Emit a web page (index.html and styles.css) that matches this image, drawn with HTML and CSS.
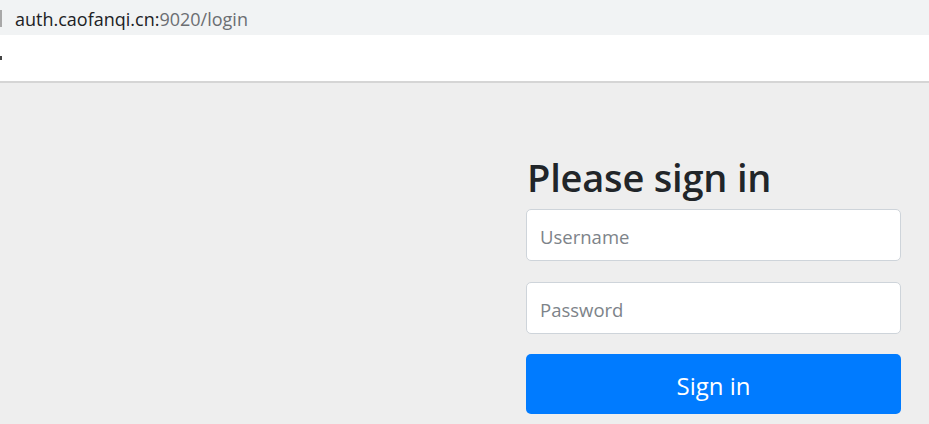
FILE: index.html
```html
<!DOCTYPE html>
<html>
<head>
<meta charset="utf-8">
<link rel="stylesheet" href="styles.css">
</head>
<body>
<div class="addr">
  <span class="caret"></span>
  <span class="url"><span class="host">auth.caofanqi.cn:</span><span class="path">9020/login</span></span>
</div>
<div class="toolbar"><span class="mark"></span></div>
<main class="page">
  <form class="signin">
    <h2 class="title">Please sign in</h2>
    <input class="field" type="text" placeholder="Username">
    <input class="field" type="password" placeholder="Password">
    <button class="btn" type="button">Sign in</button>
  </form>
</main>
</body>
</html>
```

FILE: styles.css
```css
html, body {
  margin: 0;
  padding: 0;
  height: 100%;
  overflow: hidden;
  background: #eeeeee;
  font-family: "Open Sans", "Noto Sans", sans-serif;
}
.addr {
  height: 35px;
  background: #f1f3f4;
  display: flex;
  align-items: center;
  gap: 13px;
}
.caret {
  width: 2px;
  height: 17px;
  background: #a8a8a8;
  margin-top: 2px;
}
.url {
  font-size: 18px;
  margin-top: 2px;
}
.host { color: #202124; }
.path { color: #6b6e72; }
.toolbar {
  height: 46px;
  background: #ffffff;
  border-bottom: 2px solid #d5d5d5;
  display: flex;
  align-items: center;
}
.mark {
  width: 2px;
  height: 4px;
  background: #444;
}
.page {
  padding: 70px 0 0 526px;
}
.signin {
  width: 375px;
  display: flex;
  flex-direction: column;
}
.title {
  margin: 0 0 8px 1px;
  font-size: 38px;
  font-weight: 600;
  color: #212529;
  line-height: 48px;
  letter-spacing: -0.2px;
}
.field {
  box-sizing: border-box;
  height: 52px;
  border: 1px solid #ced4da;
  border-radius: 5px;
  background: #fff;
  padding: 3px 13px 0;
  font-family: inherit;
  font-size: 18.5px;
  color: #495057;
  margin: 0 0 21px 0;
  outline: none;
}
.field + .field { margin-bottom: 20px; }
.field::placeholder { color: #7d8389; }
.btn {
  height: 60px;
  border: none;
  border-radius: 5px;
  background: #007bff;
  color: #fff;
  font-family: inherit;
  font-size: 24px;
  padding: 2px 0 0;
}
```
